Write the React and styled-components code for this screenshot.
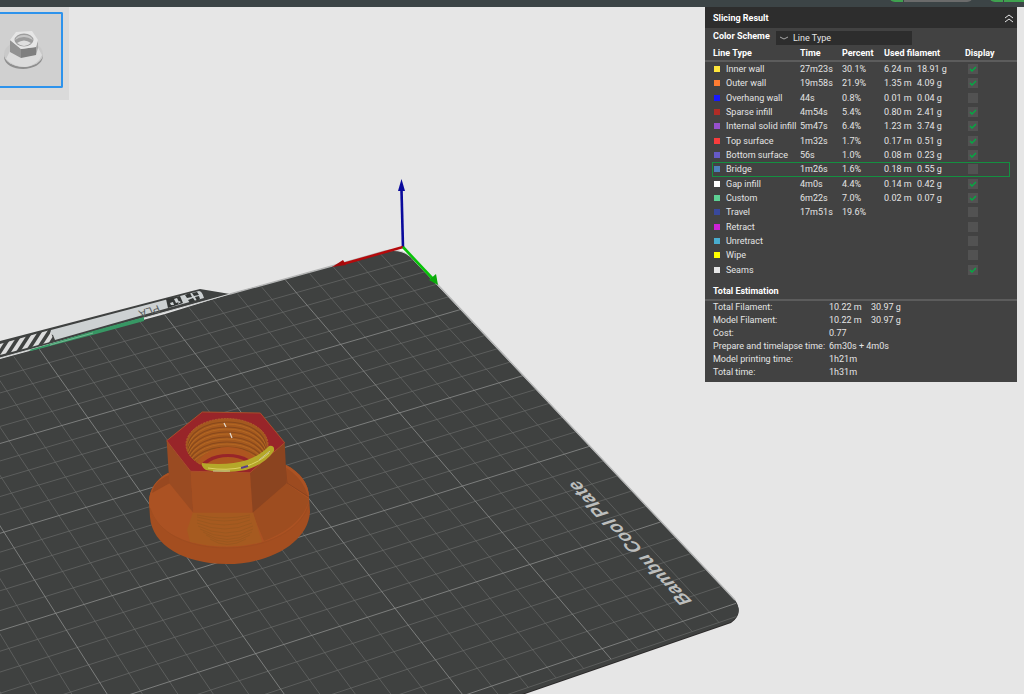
import React, { useState } from "react";
import styled, { createGlobalStyle } from "styled-components";

const LINE_TYPES = [
  { name: "Inner wall", color: "#ffe63c", time: "27m23s", percent: "30.1%", length: "6.24 m", weight: "18.91 g", shown: true },
  { name: "Outer wall", color: "#ff7d32", time: "19m58s", percent: "21.9%", length: "1.35 m", weight: "4.09 g", shown: true },
  { name: "Overhang wall", color: "#1818ff", time: "44s", percent: "0.8%", length: "0.01 m", weight: "0.04 g", shown: false },
  { name: "Sparse infill", color: "#b02c26", time: "4m54s", percent: "5.4%", length: "0.80 m", weight: "2.41 g", shown: true },
  { name: "Internal solid infill", color: "#9650cc", time: "5m47s", percent: "6.4%", length: "1.23 m", weight: "3.74 g", shown: true },
  { name: "Top surface", color: "#f83c3c", time: "1m32s", percent: "1.7%", length: "0.17 m", weight: "0.51 g", shown: true },
  { name: "Bottom surface", color: "#665ac6", time: "56s", percent: "1.0%", length: "0.08 m", weight: "0.23 g", shown: true },
  { name: "Bridge", color: "#4c80ba", time: "1m26s", percent: "1.6%", length: "0.18 m", weight: "0.55 g", shown: false, active: true },
  { name: "Gap infill", color: "#ffffff", time: "4m0s", percent: "4.4%", length: "0.14 m", weight: "0.42 g", shown: true },
  { name: "Custom", color: "#5ed194", time: "6m22s", percent: "7.0%", length: "0.02 m", weight: "0.07 g", shown: true },
  { name: "Travel", color: "#38489b", time: "17m51s", percent: "19.6%", shown: false },
  { name: "Retract", color: "#cd22d6", shown: false },
  { name: "Unretract", color: "#49adcf", shown: false },
  { name: "Wipe", color: "#ffff00", shown: false },
  { name: "Seams", color: "#e6e6e6", shown: true },
];

const TOTALS = [
  ["Total Filament:", "10.22 m", "30.97 g"],
  ["Model Filament:", "10.22 m", "30.97 g"],
  ["Cost:", "0.77"],
  ["Prepare and timelapse time:", "6m30s + 4m0s"],
  ["Model printing time:", "1h21m"],
  ["Total time:", "1h31m"],
];

// plate coordinates (50mm units) -> screen
const ANCHORS = [
  [0, 0, 403.5, 247],
  [0, 5, 736, 603.3],
  [4, 3, 55.7, 613.3],
  [2, 0, 164.3, 314.3],
];

const solve = (m) => {
  const n = m.length;
  for (let i = 0; i < n; i++) {
    let p = i;
    for (let r = i; r < n; r++) if (Math.abs(m[r][i]) > Math.abs(m[p][i])) p = r;
    [m[i], m[p]] = [m[p], m[i]];
    for (let r = 0; r < n; r++) {
      if (r === i) continue;
      const f = m[r][i] / m[i][i];
      for (let c = i; c <= n; c++) m[r][c] -= f * m[i][c];
    }
  }
  return m.map((row, i) => row[n] / row[i]);
};

const H = solve(
  ANCHORS.flatMap(([u, v, x, y]) => [
    [u, v, 1, 0, 0, 0, -u * x, -v * x, x],
    [0, 0, 0, u, v, 1, -u * y, -v * y, y],
  ])
);

const project = (u, v) => {
  const w = H[6] * u + H[7] * v + 1;
  return [(H[0] * u + H[1] * v + H[2]) / w, (H[3] * u + H[4] * v + H[5]) / w];
};

const segment = (u1, v1, u2, v2) =>
  `M${project(u1, v1).map((n) => n.toFixed(1))}L${project(u2, v2).map((n) => n.toFixed(1))}`;

const gridPath = (major) => {
  const parts = [];
  for (let i = 1; i <= 25; i++) {
    if ((i % 5 === 0) !== major) continue;
    parts.push(segment(0, i / 5, 5, i / 5));
    parts.push(segment(i / 5, 0, i / 5, 5.12));
  }
  if (!major) parts.push(segment(0.05, 5.12, 5, 5.12));
  return parts.join("");
};

const PLATE =
  "M0 359L165 314L230 294L332 266L385 252Q404 248 414 261L438 286L735 600Q744 613 731 622L525 693L500 702L0 870Z";

const Nut = () => (
  <g>
    <path d="M149 502C149 490 156 479 168 473L286 465C300 472 309 484 309 497L310 512C308 542 271 564 227 564C184 564 152 545 150 517Z" fill="#a44e20" />
    <path d="M149 502C149 490 156 479 168 473L286 465C300 472 309 484 309 497C307 527 270 547 227 547C184 547 150 529 149 502Z" fill="#ab5223" />
    <path d="M286 483L309 499C306 516 290 531 264 541L252 512Z" fill="#9e4d20" />
    <path d="M193 512H253L262 542Q227 551 190 542L187 530Z" fill="#a65a20" />
    <g fill="none" stroke="#93551f" strokeWidth="0.6">
      <path d="M197 515Q224 521 250 515M197 517Q225 525 250 517M197 520Q225 530 250 520M197 523Q225 535 252 523M198 526Q226 540 253 526M200 529Q227 544 253 529M203 532Q227 547 252 532M206 535Q227 549 250 535M210 539Q227 550 246 539" />
    </g>
    <path d="M150 508C158 533 187 548 227 548C267 548 302 530 309 504" fill="none" stroke="#9b4b20" strokeWidth="0.6" />
    <path d="M169 475Q154 481 152 493L170 483Z" fill="#984820" />
    <path d="M285 467Q304 479 308 497L287 483Z" fill="#9d4b20" />
    <path d="M285 465L287 483L309 497" fill="none" stroke="#824020" strokeWidth="0.7" />
    <path d="M166.700 440.700L190.700 471.300L193.300 512.700L169.300 483.300Z" fill="#9a4b22" />
    <path d="M190.700 471.300L250 472.700L252.700 512.700H193.300Z" fill="#a55022" />
    <path d="M250 472.700L284.700 442.700L286.700 483.300L252.700 512.700Z" fill="#8b4420" />
    <path d="M202.300 412L260.300 413L284.700 442.700L250 472.700L190.700 471.300L166.700 440.700Z" fill="#982529" stroke="#aa4d2a" strokeWidth="1" />
    <clipPath id="bore">
      <ellipse cx="227" cy="444.500" rx="41" ry="26" />
    </clipPath>
    <g clipPath="url(#bore)">
      <rect x="184" y="416" width="86" height="58" fill="#a4591f" />
      <g fill="none">
        {[0, 5, 10, 15, 20, 25].map((dy) => (
          <g key={dy}>
            <ellipse cx="227" cy={447 + dy} rx="39" ry="25" stroke="#88491c" strokeWidth="1.2" />
            <ellipse cx="227" cy={449 + dy} rx="39" ry="25" stroke="#b76c24" strokeWidth="0.8" />
          </g>
        ))}
      </g>
      <ellipse cx="228" cy="474" rx="34" ry="27" fill="#ae5520" />
      <ellipse cx="228" cy="471" rx="29" ry="17" fill="#982529" />
      <ellipse cx="228" cy="473" rx="26" ry="16" fill="#ad571f" />
    </g>
    <ellipse cx="227" cy="444.500" rx="41" ry="26" fill="none" stroke="#b16b2c" strokeWidth="0.8" strokeDasharray="2 1" />
    <path d="M202 463Q228 466 247 460Q261 455 269 446Q275 445 274 451Q265 464 246 470Q224 474 206 470Q201 467 202 463Z" fill="#b5a729" />
    <path d="M208 468Q226 471 244 467Q260 462 269 453" fill="none" stroke="#ddd264" strokeWidth="1" />
    <path d="M213 471H230M259 460L270 451" stroke="#c5c0a0" strokeWidth="1" />
    <path d="M241 468L248 466" stroke="#593c88" strokeWidth="2" />
    <path d="M224 423L226 427M230 433L232 438" stroke="#e5ddd2" strokeWidth="1.2" />
  </g>
);

const Scene = () => (
  <SceneSvg viewBox="0 7 1024 687" preserveAspectRatio="xMinYMin slice" aria-label="Print preview">
    <defs>
      <clipPath id="plate">
        <path d={PLATE} />
      </clipPath>
      <clipPath id="hatch">
        <path d="M0 344L50 330L54 341L0 355Z" />
      </clipPath>
    </defs>
    <path d={PLATE} fill="#2b2929" transform="translate(0 1)" />
    <path d={PLATE} fill="#3f4140" />
    <g clipPath="url(#plate)" fill="none">
      <path d={gridPath(false)} stroke="#686a69" strokeWidth="0.7" />
      <path d={gridPath(true)} stroke="#8b8d8c" strokeWidth="0.8" />
    </g>
    <path d="M230 294L332 266L385 251Q401 247 412 257L438 285L735 600" fill="none" stroke="#b4b5b5" strokeWidth="1.4" />
    <path d="M387 251Q402 247 412 258L403 246Z" fill="#f4f4f4" />

    <path d="M0 341L192 291L200 289L230 294L0 358Z" fill="#3f4140" />
    <path d="M51 330L199 291Q202 291 204 298L143 315L55 340L53 335L50 334Z" fill="#cdd1d2" />
    <g clipPath="url(#hatch)" stroke="#dcdcdc" strokeWidth="4">
      {[-18, -9, 0, 9, 18, 27, 36, 45].map((x) => (
        <path key={x} d={`M${x - 2} 362L${x + 20} 328`} />
      ))}
    </g>
    <path d="M0 358L230 294" stroke="#cfd1d1" strokeWidth="1" />
    <path d="M29 350L93 331L144 317V321L96 334L31 351Z" fill="#379764" />
    <path d="M50 345L93 333" stroke="#8fc4a8" strokeWidth="0.7" />
    <PlateText $size={11} $color="#5b5e5e" transform="matrix(-0.96 0.27 -0.4 -0.9 158 305)">
      PLA
    </PlateText>
    <path d="M166 299L180 296L183 303L168 308Z" fill="#343736" />
    <path d="M170 303L173 302L174 305L171 305ZM174 299L177 298L179 302L176 303ZM179 301L181 302L178 304Z" fill="#cdd1d2" />
    <path d="M185 295L190 293L192 297L187 298ZM192 293L197 292L199 295L194 296ZM188 300L193 298L195 301L190 303ZM195 297L199 296L200 299L197 301Z" fill="#343736" />
    <PlateText $size={19} $color="#bcbebd" $bold transform="matrix(-0.71 -0.75 0.95 -0.31 693 602)">
      Bambu Cool Plate
    </PlateText>

    <path d="M403 248L401.500 190" stroke="#0a0a9c" strokeWidth="2.600" />
    <path d="M401.500 179L405 191H398Z" fill="#0a0a9c" />
    <path d="M403 247L343 264" stroke="#b40a0c" strokeWidth="2.400" />
    <path d="M332 267L343 260L346 265Z" fill="#a40a0c" />
    <path d="M403 247L433 279" stroke="#08c208" strokeWidth="2.600" />
    <path d="M438 285L429 280L436 274Z" fill="#0aa80a" />
    <Nut />
  </SceneSvg>
);

const PlateThumb = () => (
  <svg width="44" height="44" viewBox="0 0 44 44" aria-hidden="true">
    <path d="M4 25C4 43 42 43 43 25L43 28C42 45 5 45 4 29Z" fill="#8f8f8f" />
    <ellipse cx="23.500" cy="26" rx="19.500" ry="13" fill="#c9c9c9" />
    <path d="M10 23L21 29L35 27L37 18L42 27Q38 37 25 39Q12 38 6 31Z" fill="#dcdcdc" />
    <path d="M10 12L21 21V30L10 24Z" fill="#929292" />
    <path d="M21 21L36 19V27L21 30Z" fill="#7f7f7f" />
    <path d="M36 19L38 12V20L36 27Z" fill="#a6a6a6" />
    <path d="M16 4L32 3L38 12L36 19L21 21L10 12Z" fill="#e6e6e6" />
    <ellipse cx="24" cy="12" rx="9.500" ry="6.500" fill="#9d9d9d" />
    <path d="M15 12Q17 7 24 7Q31 7 33 12Q28 9 24 9Q19 9 15 12Z" fill="#c6c6c6" />
    <path d="M17 15Q24 10 31 15Q24 21 17 15Z" fill="#dedede" />
  </svg>
);

export default function App() {
  const [rows, setRows] = useState(LINE_TYPES);

  const toggle = (name) =>
    setRows(rows.map((row) => (row.name === name ? { ...row, shown: !row.shown } : row)));

  return (
    <Page>
      <GlobalStyle />
      <TopBar>
        <BarButton $width={14} $side="left" aria-label="Slice options" />
        <BarButton $width={69} $side="right" $muted aria-label="Slice plate" />
        <BarSpacer />
        <BarButton $width={14} $side="left" aria-label="Print options" />
        <BarButton $width={20} aria-label="Print plate" />
      </TopBar>
      <Viewport>
        <Scene />
        <PlateStrip>
          <PlateTile aria-label="Plate 1">
            <PlateThumb />
          </PlateTile>
        </PlateStrip>
        <Panel>
          <PanelHeader>
            Slicing Result
            <CollapseButton aria-label="Collapse">
              <svg width="10" height="10" viewBox="0 0 10 10" fill="none" stroke="#e8e8e8">
                <path d="M1 5L5 2L9 5M1 9L5 6L9 9" />
              </svg>
            </CollapseButton>
          </PanelHeader>
          <SchemeRow>
            <SchemeLabel htmlFor="scheme">Color Scheme</SchemeLabel>
            <SelectBox>
              <svg width="8" height="4" viewBox="0 0 8 4" fill="none" stroke="#a8a8a8">
                <path d="M0 1L4 3L8 1" />
              </svg>
              <Select id="scheme">
                <option>Line Type</option>
              </Select>
            </SelectBox>
          </SchemeRow>
          <LineTable>
            <colgroup>
              <Col $width={88} />
              <Col $width={42} />
              <Col $width={42} />
              <Col $width={33} />
              <Col $width={48} />
              <Col $width={45} />
            </colgroup>
            <thead>
              <HeadRow>
                <HeadCell $first>Line Type</HeadCell>
                <HeadCell>Time</HeadCell>
                <HeadCell>Percent</HeadCell>
                <HeadCell colSpan={2}>Used filament</HeadCell>
                <HeadCell>Display</HeadCell>
              </HeadRow>
            </thead>
            <tbody>
              {rows.map((row) => (
                <LineRow key={row.name} $active={row.active}>
                  <Cell>
                    <LineName htmlFor={row.name}>
                      <Swatch $color={row.color} />
                      {row.name}
                    </LineName>
                  </Cell>
                  <Cell>{row.time}</Cell>
                  <Cell>{row.percent}</Cell>
                  <Cell>{row.length}</Cell>
                  <Cell>{row.weight}</Cell>
                  <Cell>
                    <Check type="checkbox" id={row.name} checked={row.shown} onChange={() => toggle(row.name)} />
                  </Cell>
                </LineRow>
              ))}
            </tbody>
          </LineTable>
          <TotalsTitle>Total Estimation</TotalsTitle>
          <TotalsTable>
            <tbody>
              {TOTALS.map(([label, value, weight]) => (
                <tr key={label}>
                  <TotalsLabel scope="row">{label}</TotalsLabel>
                  <TotalsValue colSpan={weight ? 1 : 2}>{value}</TotalsValue>
                  {weight ? <TotalsValue>{weight}</TotalsValue> : null}
                </tr>
              ))}
            </tbody>
          </TotalsTable>
        </Panel>
      </Viewport>
    </Page>
  );
}

const GlobalStyle = createGlobalStyle`
  * {
    box-sizing: border-box;
  }
  body {
    margin: 0;
    background: #e6e6e6;
    font-family: Roboto, sans-serif;
    font-size: 9px;
    line-height: 12px;
    color: #e4e4e4;
  }
  button, select, input {
    font: inherit;
    color: inherit;
    margin: 0;
    padding: 0;
    border: 0;
  }
`;

const Page = styled.div`
  display: flex;
  flex-direction: column;
  height: 100vh;
  overflow: hidden;
`;

const TopBar = styled.header`
  display: flex;
  flex: none;
  justify-content: flex-end;
  align-items: flex-end;
  gap: 1px;
  height: 7px;
  padding-bottom: 5px;
  background: #3c4446;
  overflow: hidden;
`;

const BarButton = styled.button`
  flex: none;
  width: ${(p) => p.$width}px;
  height: 20px;
  background: ${(p) => (p.$muted ? "#6b6b6b" : "#3fa14f")};
  border-bottom-left-radius: ${(p) => (p.$side === "left" ? 6 : 0)}px;
  border-bottom-right-radius: ${(p) => (p.$side === "right" ? 6 : 0)}px;
`;

const BarSpacer = styled.span`
  width: 14px;
`;

const Viewport = styled.main`
  position: relative;
  display: flex;
  flex: 1;
  justify-content: space-between;
  align-items: flex-start;
  padding-right: 7px;
  min-height: 0;
`;

const SceneSvg = styled.svg`
  position: absolute;
  inset: 0;
  width: 100%;
  height: 100%;
`;

const PlateText = styled.text`
  font-family: "Liberation Sans", sans-serif;
  font-size: ${(p) => p.$size}px;
  font-weight: ${(p) => (p.$bold ? "bold" : "normal")};
  fill: ${(p) => p.$color};
`;

const PlateStrip = styled.aside`
  position: relative;
  width: 69px;
  padding: 5px 6px 12px 0;
  background: #dadada;
`;

const PlateTile = styled.button`
  display: flex;
  align-items: center;
  width: 63px;
  height: 76px;
  background: #d0d0d0;
  border: 2px solid #2d93ec;
  border-left: 0;
  border-radius: 0 2px 2px 0;
`;

const Panel = styled.section`
  position: relative;
  width: 312px;
  padding-bottom: 3px;
  background: #424242;
`;

const PanelHeader = styled.header`
  display: flex;
  justify-content: space-between;
  align-items: center;
  height: 21px;
  padding: 0 3px 0 8px;
  background: #2d2d2d;
  font-weight: bold;
  color: #fff;
`;

const CollapseButton = styled.button`
  display: flex;
  background: none;
`;

const SchemeRow = styled.div`
  display: flex;
  align-items: flex-start;
  height: 17px;
  padding: 2px 8px 0;
`;

const SchemeLabel = styled.label`
  width: 63px;
  white-space: nowrap;
  font-weight: bold;
  color: #fff;
`;

const SelectBox = styled.div`
  display: flex;
  align-items: center;
  gap: 5px;
  width: 136px;
  height: 14px;
  margin-top: 1px;
  padding-left: 4px;
  background: #2d2d2d;
`;

const Select = styled.select`
  flex: 1;
  appearance: none;
  background: none;
`;

const LineTable = styled.table`
  width: 298px;
  height: 232px;
  margin: 0 7px;
  table-layout: fixed;
  border-collapse: collapse;
`;

const Col = styled.col`
  width: ${(p) => p.$width}px;
`;

const HeadRow = styled.tr`
  position: relative;
  height: 17px;

  &::after {
    content: "";
    position: absolute;
    left: -7px;
    right: -7px;
    bottom: 0;
    height: 2px;
    background: #5c5c5c;
  }
`;

const HeadCell = styled.th`
  padding: 0 0 1px ${(p) => (p.$first ? 1 : 0)}px;
  text-align: left;
  white-space: nowrap;
  color: #fff;
`;

const LineRow = styled.tr`
  outline: ${(p) => (p.$active ? "1px solid #148f40" : "none")};
  outline-offset: -1px;
`;

const Cell = styled.td`
  padding: 0;
  white-space: nowrap;
  vertical-align: middle;
`;

const LineName = styled.label`
  display: flex;
  align-items: center;
  gap: 6px;
  padding-left: 2px;
`;

const Swatch = styled.span`
  flex: none;
  width: 6px;
  height: 6px;
  background: ${(p) => p.$color};
`;

const Check = styled.input`
  appearance: none;
  display: block;
  width: 10px;
  height: 10px;
  margin-left: 3px;
  background: #525252;

  &:checked {
    background: #525252
      url("data:image/svg+xml,%3Csvg xmlns='http://www.w3.org/2000/svg' viewBox='0 0 10 10'%3E%3Cpath d='M2 5L4 7L8 3' fill='none' stroke='%2300ae42' stroke-width='1.300'/%3E%3C/svg%3E");
  }
`;

const TotalsTitle = styled.h2`
  margin: 7px 0 0;
  padding: 0 8px 1px;
  border-bottom: 2px solid #5c5c5c;
  font-size: 9px;
  line-height: 14px;
  color: #fff;
`;

const TotalsTable = styled.table`
  margin: 0 8px;
  border-collapse: collapse;
  line-height: 13px;
`;

const TotalsLabel = styled.th`
  width: 116px;
  padding: 0;
  text-align: left;
  font-weight: normal;
  white-space: nowrap;
`;

const TotalsValue = styled.td`
  padding: 0;
  min-width: 42px;
  white-space: nowrap;
`;
